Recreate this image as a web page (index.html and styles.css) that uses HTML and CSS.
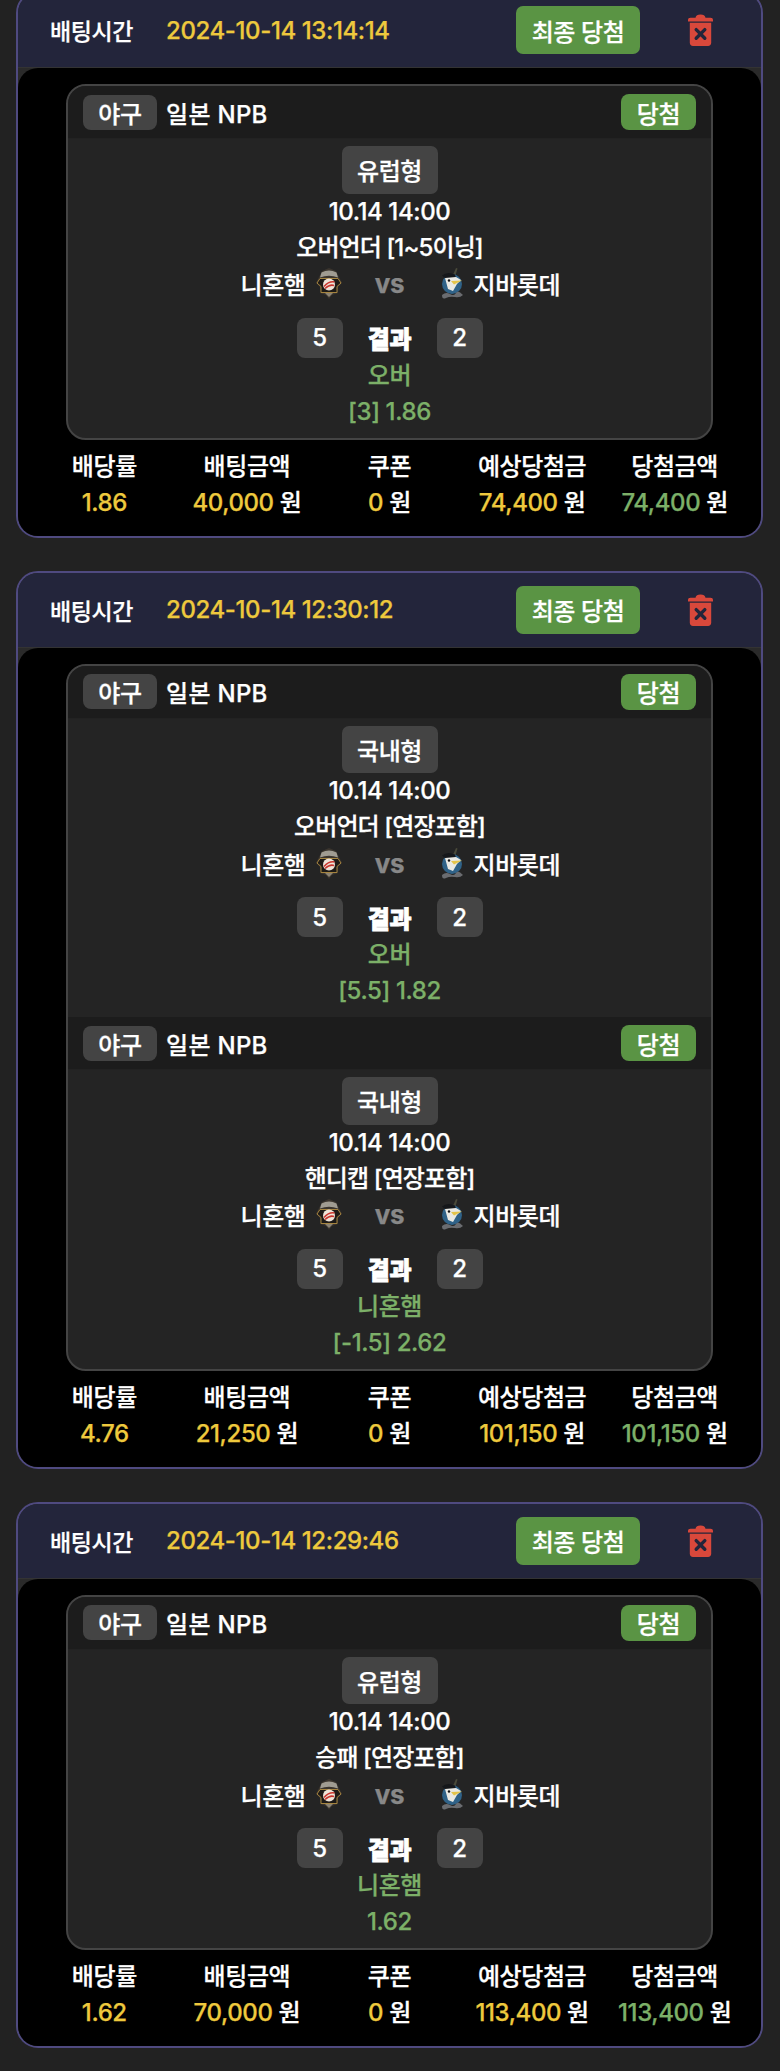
FILE: index.html
```html
<!DOCTYPE html>
<html lang="ko">
<head>
<meta charset="utf-8">
<title>배팅내역</title>
<link rel="stylesheet" href="styles.css">
</head>
<body>
<svg class="defs" width="0" height="0" aria-hidden="true">
  <symbol id="trash" viewBox="0 0 25 32">
    <path d="M0 6.2C0 4.6 1 3.8 2.5 3.8H7.5C8 1.4 9.5 0.4 12.5 0.4S17 1.4 17.5 3.8H22.5C24 3.8 25 4.6 25 6.2V7.6H0Z" fill="#d9483b"/>
    <path d="M1.8 8.8H23.2V28.6C23.2 30.6 22 32 20 32H5C3 32 1.8 30.6 1.8 28.6Z" fill="#d9483b"/>
    <path d="M8.2 15.6L16.8 24.2M16.8 15.6L8.2 24.2" stroke="#23253b" stroke-width="3.4" stroke-linecap="round"/>
  </symbol>
  <symbol id="fighters" viewBox="0 0 26 31">
    <path d="M13 0L20 3L23 9L26 15L22 19L22 25L16 27L13 31L10 27L4 25L4 19L0 15L3 9L6 3Z" fill="#3b352e"/>
    <path d="M5.500 4.500Q13 0.500 20.500 4.500L22 9.500Q13 6 4 9.500Z" fill="#a09c92"/>
    <path d="M4 10.500L22 10.500L25 15L21 18.500L21 24.500L5 24.500L5 18.500L1 15Z" fill="#1d1a17" stroke="#a5843f" stroke-width="1"/>
    <circle cx="13" cy="16.500" r="6" fill="#efe4d8"/>
    <path d="M8 18.500Q13 13 18.500 14M9 20.500Q14 16 18 17.500" stroke="#c8342d" stroke-width="1.500" fill="none"/>
    <path d="M9 25H17L13 29Z" fill="#8a8272"/>
  </symbol>
  <symbol id="marlins" viewBox="0 0 24 31">
    <path d="M16 0L17.500 0.500L15 9L12.500 8Z" fill="#4a4a3a"/>
    <circle cx="12" cy="16" r="10" fill="#2f6288"/>
    <path d="M2 7.500Q7 3 15 6.500L16 10L6 11Z" fill="#15171a"/>
    <path d="M5 10L16 9L21 12L17 16L13 23L8 21Z" fill="#e9e9e4"/>
    <path d="M11 13L22 12.500L14 16.500Z" fill="#e3c44a"/>
    <circle cx="9" cy="12.500" r="1.200" fill="#111"/>
    <path d="M2 27Q6 23.500 10 26T16 25T23 27Q20 30 15 29T6 30T2 27Z" fill="#6a6c70"/>
  </symbol>
</svg>

<main class="list">

  <section class="bet">
    <header class="bet-head">
      <span class="head-label">배팅시간</span>
      <span class="head-date">2024-10-14 13:14:14</span>
      <span class="final">최종 당첨</span>
      <svg class="trash"><use href="#trash"/></svg>
    </header>
    <div class="bet-body">
      <div class="slip">
        <article class="game">
          <div class="game-head">
            <span class="sport">야구</span>
            <span class="league">일본 NPB</span>
            <span class="won">당첨</span>
          </div>
          <div class="game-body">
            <span class="type">유럽형</span>
            <div class="line">10.14 14:00</div>
            <div class="line market">오버언더 [1~5이닝]</div>
            <div class="teams">
              <div class="team home">니혼햄<svg class="logo logo-f"><use href="#fighters"/></svg></div>
              <span class="vs">vs</span>
              <div class="team away"><svg class="logo logo-m"><use href="#marlins"/></svg>지바롯데</div>
            </div>
            <div class="score">
              <span class="num">5</span>
              <b class="res">결과</b>
              <span class="num">2</span>
            </div>
            <div class="line pick">오버</div>
            <div class="line pick">[3] 1.86</div>
          </div>
        </article>
      </div>
      <div class="stats">
        <div class="stat"><span class="stat-k">배당률</span><span class="stat-v"><em class="amt">1.86</em></span></div>
        <div class="stat"><span class="stat-k">배팅금액</span><span class="stat-v"><em class="amt">40,000</em> 원</span></div>
        <div class="stat"><span class="stat-k">쿠폰</span><span class="stat-v"><em class="amt">0</em> 원</span></div>
        <div class="stat"><span class="stat-k">예상당첨금</span><span class="stat-v"><em class="amt">74,400</em> 원</span></div>
        <div class="stat"><span class="stat-k">당첨금액</span><span class="stat-v"><em class="amt green">74,400</em> 원</span></div>
      </div>
    </div>
  </section>

  <section class="bet">
    <header class="bet-head">
      <span class="head-label">배팅시간</span>
      <span class="head-date">2024-10-14 12:30:12</span>
      <span class="final">최종 당첨</span>
      <svg class="trash"><use href="#trash"/></svg>
    </header>
    <div class="bet-body">
      <div class="slip">
        <article class="game">
          <div class="game-head">
            <span class="sport">야구</span>
            <span class="league">일본 NPB</span>
            <span class="won">당첨</span>
          </div>
          <div class="game-body">
            <span class="type">국내형</span>
            <div class="line">10.14 14:00</div>
            <div class="line market">오버언더 [연장포함]</div>
            <div class="teams">
              <div class="team home">니혼햄<svg class="logo logo-f"><use href="#fighters"/></svg></div>
              <span class="vs">vs</span>
              <div class="team away"><svg class="logo logo-m"><use href="#marlins"/></svg>지바롯데</div>
            </div>
            <div class="score">
              <span class="num">5</span>
              <b class="res">결과</b>
              <span class="num">2</span>
            </div>
            <div class="line pick">오버</div>
            <div class="line pick">[5.5] 1.82</div>
          </div>
        </article>
        <article class="game">
          <div class="game-head">
            <span class="sport">야구</span>
            <span class="league">일본 NPB</span>
            <span class="won">당첨</span>
          </div>
          <div class="game-body">
            <span class="type">국내형</span>
            <div class="line">10.14 14:00</div>
            <div class="line market">핸디캡 [연장포함]</div>
            <div class="teams">
              <div class="team home">니혼햄<svg class="logo logo-f"><use href="#fighters"/></svg></div>
              <span class="vs">vs</span>
              <div class="team away"><svg class="logo logo-m"><use href="#marlins"/></svg>지바롯데</div>
            </div>
            <div class="score">
              <span class="num">5</span>
              <b class="res">결과</b>
              <span class="num">2</span>
            </div>
            <div class="line pick">니혼햄</div>
            <div class="line pick">[-1.5] 2.62</div>
          </div>
        </article>
      </div>
      <div class="stats">
        <div class="stat"><span class="stat-k">배당률</span><span class="stat-v"><em class="amt">4.76</em></span></div>
        <div class="stat"><span class="stat-k">배팅금액</span><span class="stat-v"><em class="amt">21,250</em> 원</span></div>
        <div class="stat"><span class="stat-k">쿠폰</span><span class="stat-v"><em class="amt">0</em> 원</span></div>
        <div class="stat"><span class="stat-k">예상당첨금</span><span class="stat-v"><em class="amt">101,150</em> 원</span></div>
        <div class="stat"><span class="stat-k">당첨금액</span><span class="stat-v"><em class="amt green">101,150</em> 원</span></div>
      </div>
    </div>
  </section>

  <section class="bet">
    <header class="bet-head">
      <span class="head-label">배팅시간</span>
      <span class="head-date">2024-10-14 12:29:46</span>
      <span class="final">최종 당첨</span>
      <svg class="trash"><use href="#trash"/></svg>
    </header>
    <div class="bet-body">
      <div class="slip">
        <article class="game">
          <div class="game-head">
            <span class="sport">야구</span>
            <span class="league">일본 NPB</span>
            <span class="won">당첨</span>
          </div>
          <div class="game-body">
            <span class="type">유럽형</span>
            <div class="line">10.14 14:00</div>
            <div class="line market">승패 [연장포함]</div>
            <div class="teams">
              <div class="team home">니혼햄<svg class="logo logo-f"><use href="#fighters"/></svg></div>
              <span class="vs">vs</span>
              <div class="team away"><svg class="logo logo-m"><use href="#marlins"/></svg>지바롯데</div>
            </div>
            <div class="score">
              <span class="num">5</span>
              <b class="res">결과</b>
              <span class="num">2</span>
            </div>
            <div class="line pick">니혼햄</div>
            <div class="line pick">1.62</div>
          </div>
        </article>
      </div>
      <div class="stats">
        <div class="stat"><span class="stat-k">배당률</span><span class="stat-v"><em class="amt">1.62</em></span></div>
        <div class="stat"><span class="stat-k">배팅금액</span><span class="stat-v"><em class="amt">70,000</em> 원</span></div>
        <div class="stat"><span class="stat-k">쿠폰</span><span class="stat-v"><em class="amt">0</em> 원</span></div>
        <div class="stat"><span class="stat-k">예상당첨금</span><span class="stat-v"><em class="amt">113,400</em> 원</span></div>
        <div class="stat"><span class="stat-k">당첨금액</span><span class="stat-v"><em class="amt green">113,400</em> 원</span></div>
      </div>
    </div>
  </section>

</main>
</body>
</html>
```
FILE: styles.css
```css
* { box-sizing: border-box; }

html, body { margin: 0; padding: 0; background: #222222; }

body {
  color: #ffffff;
  font-family: "Inter", "Noto Sans CJK KR", sans-serif;
  font-size: 24px;
  font-weight: 500;
  letter-spacing: -0.4px;
  -webkit-text-stroke: 0.25px currentColor;
  overflow-x: hidden;
}

.defs { position: absolute; }

.list {
  display: flex;
  flex-direction: column;
  gap: 33px;
  margin-top: -9px;
  padding: 0 17px 23px 16px;
}

.bet {
  border: 2px solid #4f4a80;
  border-radius: 22px;
  background: #2a2a2a;
  overflow: hidden;
}

.bet-head {
  display: flex;
  align-items: center;
  height: 75px;
  padding: 0 48px 0 32px;
  background: #23253b;
  border-bottom: 1px solid #333333;
}

.head-label { width: 116px; flex: none; font-size: 23px; }
.head-date { color: #eec93d; }

.final {
  display: flex;
  align-items: center;
  justify-content: center;
  width: 124px;
  height: 48px;
  margin-left: auto;
  margin-right: 48px;
  border-radius: 7px;
  background: #5a9444;
}

.trash { width: 25px; height: 32px; flex: none; }

.bet-body {
  padding: 16px 15px 15px;
  background: #000000;
  border-radius: 20px 20px 0 0;
}

.slip {
  margin: 0 33px;
  border: 2px solid #444444;
  border-radius: 20px;
  background: #242424;
  overflow: hidden;
}

.game-head {
  display: flex;
  align-items: center;
  gap: 9px;
  height: 53px;
  padding: 0 15px;
  background: #1c1c1c;
  border-bottom: 1px solid #222222;
}

.sport {
  display: flex;
  align-items: center;
  justify-content: center;
  width: 74px;
  height: 35px;
  border-radius: 8px;
  background: #444444;
}

.league { letter-spacing: 0.3px; }

.won {
  display: flex;
  align-items: center;
  justify-content: center;
  width: 75px;
  height: 36px;
  margin-left: auto;
  border-radius: 8px;
  background: #5a9444;
}

.game-body {
  display: flex;
  flex-direction: column;
  align-items: center;
  padding: 7px 0 8px;
  height: 298.500px;
}

.type {
  display: flex;
  align-items: center;
  justify-content: center;
  width: 96px;
  height: 48px;
  border-radius: 7px;
  background: #444444;
}

.line {
  height: 36px;
  line-height: 36px;
  text-align: center;
}

.market { letter-spacing: -0.9px; }

.pick { color: #7cb068; }

.teams {
  display: grid;
  grid-template-columns: 1fr 94px 1fr;
  align-items: center;
  width: 100%;
  height: 36px;
}

.team {
  display: flex;
  align-items: center;
  gap: 10px;
}

.home { justify-content: flex-end; }

.logo { flex: none; height: 31px; }
.logo-f { width: 26px; margin-right: 1px; }
.logo-m { width: 24px; margin-left: 3px; }

.vs {
  color: #888888;
  font-size: 26px;
  font-weight: 700;
  text-align: center;
}

.score {
  display: grid;
  grid-template-columns: 46px 94px 46px;
  align-items: center;
  margin-top: 16px;
  height: 40px;
}

.num {
  display: flex;
  align-items: center;
  justify-content: center;
  height: 40px;
  border-radius: 8px;
  background: #444444;
}

.res {
  font-weight: 900;
  -webkit-text-stroke: 0.8px currentColor;
  text-align: center;
}

.stats {
  display: grid;
  grid-template-columns: repeat(5, 1fr);
  margin-top: 9px;
}

.stat {
  display: flex;
  flex-direction: column;
  align-items: center;
}

.stat-k,
.stat-v {
  height: 36px;
  line-height: 36px;
  white-space: nowrap;
}

.amt { color: #eec93d; font-style: normal; }
.amt.green { color: #7cb068; }
```
